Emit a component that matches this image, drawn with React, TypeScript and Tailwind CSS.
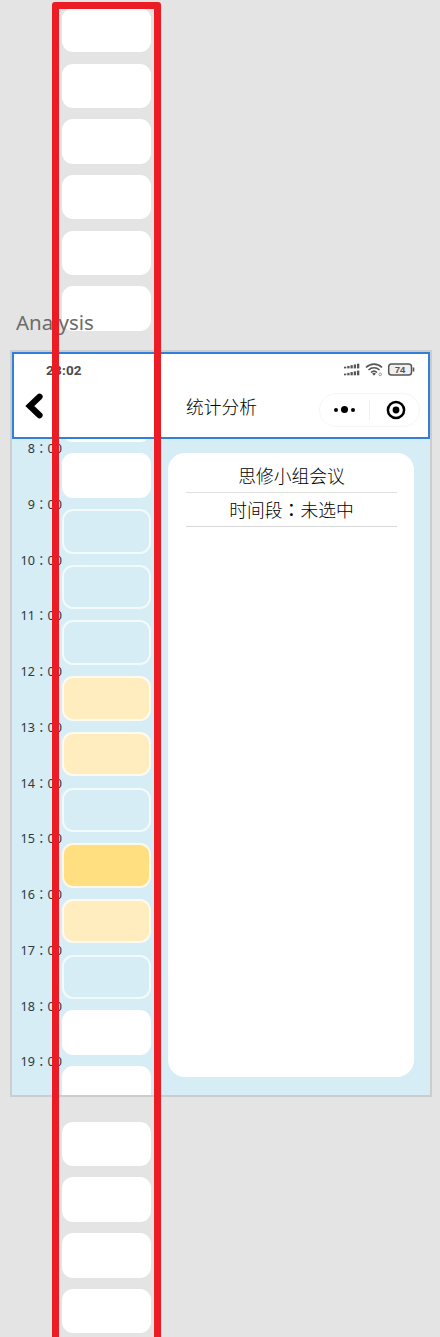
type SlotKind = "free" | "empty" | "light" | "strong" | "hidden" | "clipped";

const slots: SlotKind[] = [
  "free", "free", "free", "free", "free", "free", "hidden", "free",
  "free", "empty", "empty", "empty", "light", "light", "empty", "strong",
  "light", "empty", "free", "clipped", "free", "free", "free", "free",
];

const slotStyles: Record<SlotKind, string> = {
  free: "h-[44.5px] rounded-[11px] bg-white",
  empty: "h-[44.5px] rounded-[11px] border-2 border-[#f3fafc] bg-[#d6edf5]",
  light: "h-[44.5px] rounded-[11px] border-2 border-[#fefaf0] bg-[#ffedc0]",
  strong: "h-[44.5px] rounded-[11px] border-2 border-[#fdf8e9] bg-[#ffdf80]",
  hidden: "invisible h-[44.5px]",
  clipped: "h-[29px] rounded-t-[11px] bg-white",
};

const hours = [8, 9, 10, 11, 12, 13, 14, 15, 16, 17, 18, 19];

function StatusIcons() {
  const bars = [0, 1, 2, 3, 4];
  return (
    <svg width="72" height="16" viewBox="0 0 72 16" fill="none">
      <g fill="#555">
        {bars.map((i) => (
          <g key={i}>
            <rect x={1 + i * 3.25} y={4.7 - i * 0.75} width="2.3" height={1.7 + i * 0.75} />
            <rect x={1 + i * 3.25} y={11.6 - i * 0.75} width="2.3" height={1.7 + i * 0.75} />
          </g>
        ))}
      </g>
      <g stroke="#555" strokeWidth="1.7">
        <path d="M23 5.5C27.5 1.1 34.5 1.1 39 5.5" />
        <path d="M25.5 8c3.2-3 7.8-3 11 0" />
        <path d="M28 10.5c1.8-1.7 4.2-1.7 6 0" />
      </g>
      <path d="M29.1 11.5Q31 10.2 32.9 11.5L31 13.7Z" fill="#555" />
      <circle cx="37.2" cy="12.4" r="1.3" stroke="#999" strokeWidth="1" />
      <rect x="45.7" y="1.9" width="22.8" height="11.2" rx="2.8" fill="#f0f0f0" stroke="#555" strokeWidth="1.5" />
      <path d="M70.5 5.5v4" stroke="#555" strokeWidth="1.6" />
      <text x="57" y="11" textAnchor="middle" fontSize="9.5" fontWeight="700" fontFamily="Liberation Sans, sans-serif" fill="#555">
        74
      </text>
    </svg>
  );
}

function Header() {
  return (
    <header className="relative z-20 flex h-[87px] flex-col border-2 border-[#2f7fdb] bg-white">
      <div className="flex h-[31px] items-center justify-between pl-8 pr-[13px]">
        <span className="pt-[2px] font-['Roboto'] text-[13.5px] font-bold tracking-[0.2px] text-[#4a4a4a]">23:02</span>
        <StatusIcons />
      </div>
      <div className="flex h-[50px] items-center">
        <svg className="-mt-[9px] ml-[11px] shrink-0" width="18" height="28" viewBox="0 0 18 28">
          <path d="M14.5 4.7 4.8 14l9.7 9.3" fill="none" stroke="#000" strokeWidth="6.2" strokeLinecap="round" />
        </svg>
        <h1 className="-mt-[9px] ml-[143px] w-[72px] whitespace-nowrap font-['Noto_Sans_CJK_SC',sans-serif] text-[17.75px] font-light leading-[26px] text-black">
          统计分析
        </h1>
        <div className="-mt-[1px] ml-[61px] flex h-[34px] w-[101px] items-center rounded-full border border-[#f6f6f6]">
          <div className="flex w-[49px] items-center justify-center gap-[3px]">
            <span className="size-[4px] rounded-full bg-black" />
            <span className="size-[6.5px] rounded-full bg-black" />
            <span className="size-[4px] rounded-full bg-black" />
          </div>
          <span className="h-5 w-px bg-[#f1f1f1]" />
          <svg className="ml-[16px]" width="20" height="20" viewBox="0 0 20 20">
            <circle cx="10" cy="10" r="8.1" fill="none" stroke="#000" strokeWidth="2.5" />
            <circle cx="10" cy="10" r="3.4" />
          </svg>
        </div>
      </div>
    </header>
  );
}

function TimeRail() {
  return (
    <div className="relative z-20 flex w-[50px] shrink-0 flex-col items-end pt-[1px] font-['Noto_Sans','Noto_Sans_CJK_TC',sans-serif] text-[12.6px] text-[#2b3a40]">
      {hours.map((hour) => (
        <div key={hour} className="h-[55.75px] shrink-0 whitespace-nowrap leading-[18px]">
          {hour}
          <span className="font-['Noto_Sans_CJK_TC',sans-serif] leading-none">：</span>00
        </div>
      ))}
    </div>
  );
}

function DetailPanel() {
  return (
    <section className="ml-[106px] mt-[14px] h-[624px] w-[246px] rounded-[17px] bg-white pl-[18px] pr-[17px] pt-[6px] text-center font-['Noto_Sans_CJK_SC',sans-serif] text-[17.75px] font-light text-black">
      <div className="h-[34px] border-b border-[#dfdfdf] leading-[33px]">思修小组会议</div>
      <div className="h-[34px] border-b border-[#d8d8d8] leading-[33px]">
        时间段<span className="font-['Noto_Sans_CJK_TC',sans-serif] font-normal leading-none">：</span>未选中
      </div>
    </section>
  );
}

export default function App() {
  return (
    <main className="relative h-[1337px] w-[440px] overflow-hidden bg-[#e4e4e4] pl-[10px]">
      <div className="relative z-20 flex h-[350px] items-end pb-[13px] pl-[6px] font-['Noto_Sans'] text-[20.5px] leading-[30px] text-[#6b6b6b]">
        Analysis
      </div>
      <div className="h-[747px] w-[422px] overflow-hidden border-2 border-[#cbcdce] bg-[#d6edf5]">
        <Header />
        <div className="flex items-start">
          <TimeRail />
          <DetailPanel />
        </div>
      </div>
      <div className="absolute left-[62px] top-[7.9px] z-10 flex w-[89.3px] flex-col">
        {slots.map((kind, index) => (
          <div key={index} className="h-[55.7px] shrink-0">
            <div className={slotStyles[kind]} />
          </div>
        ))}
      </div>
      <div className="absolute left-[52px] top-[2px] z-30 h-[1350px] w-[109px] rounded-[3px] border-[7px] border-[#ec1c24]" />
    </main>
  );
}
